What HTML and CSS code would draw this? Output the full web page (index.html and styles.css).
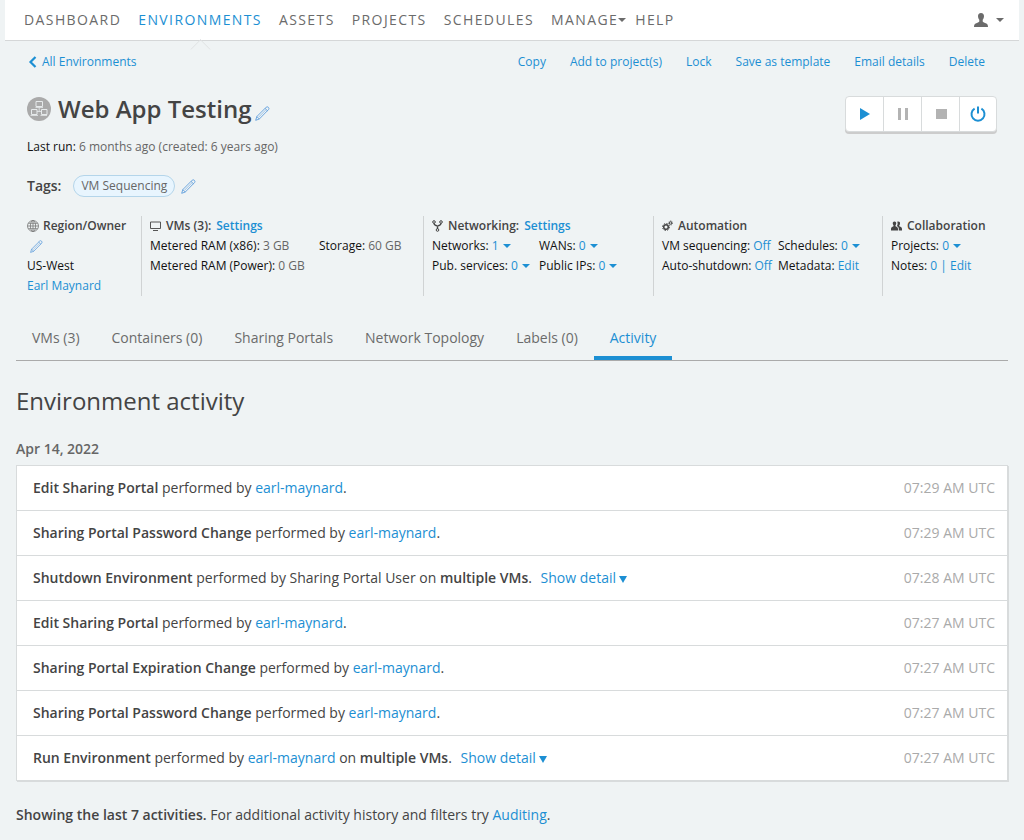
FILE: index.html
```html
<!DOCTYPE html>
<html lang="en">
<head>
<meta charset="utf-8">
<meta name="viewport" content="width=device-width, initial-scale=1">
<title>Web App Testing</title>
<link rel="stylesheet" href="styles.css">
</head>
<body>
<svg class="sprite" aria-hidden="true">
  <symbol id="pencil" viewBox="0 0 15 15"><g fill="none" stroke="currentColor" stroke-width="0.8" stroke-linejoin="round"><path d="M0.700 14.300l1.100-3.700L11.200 1.200q1-.9 2.100.1 1.200 1.100.3 2.200L4.300 13z"/><path d="M1.800 10.600l2.500 2.400M10 2.400l2.500 2.400"/><path d="M3.600 11.200l7.200-7.300" stroke-width="0.500"/></g></symbol>
</svg>

<header class="navbar">
  <nav class="nav">
    <a href="#">DASHBOARD</a>
    <a href="#" class="current">ENVIRONMENTS</a>
    <a href="#">ASSETS</a>
    <a href="#">PROJECTS</a>
    <a href="#">SCHEDULES</a>
    <button type="button" class="manage">MANAGE<span class="caret"></span></button>
    <a href="#">HELP</a>
  </nav>
  <button type="button" class="account" aria-label="Account">
    <svg width="14" height="14" viewBox="0 0 14 14" fill="currentColor"><path d="M7 0c2 0 3.100 1.300 3 3.200C9.900 5 9.200 6 8.700 6.700v1.800c.3.800 2 1.200 3.600 1.900 1.200.5 1.700 1.400 1.700 3.600H0c0-2.200.5-3.100 1.700-3.600 1.600-.7 3.300-1.100 3.600-1.900V6.700C4.800 6 4.100 5 4 3.200 3.900 1.300 5 0 7 0z"/></svg>
    <span class="caret"></span>
  </button>
</header>

<main>
  <div class="summary">
    <div class="toolbar">
      <a href="#" class="back"><svg width="9" height="12" viewBox="0 0 9 12"><path d="M7.500 1L2.500 6l5 5" fill="none" stroke="currentColor" stroke-width="2.200"/></svg>All Environments</a>
      <nav class="actions">
        <a href="#">Copy</a>
        <a href="#">Add to project(s)</a>
        <a href="#">Lock</a>
        <a href="#">Save as template</a>
        <a href="#">Email details</a>
        <a href="#">Delete</a>
      </nav>
    </div>

    <div class="title-row">
      <div class="title">
        <svg width="24" height="24" viewBox="0 0 24 24"><circle cx="12" cy="12" r="12" fill="#aaa"/><g fill="none" stroke="#e6eaeb"><path d="M9 4.500h6.500v5H9zM4.500 12.500H10v5H4.500zM14.500 12.500H20v5h-5.500z"/><path d="M8.500 10.500h7.500M3.500 18.500h7.500M13.500 18.500H20M12.200 10.500v4M10 14.500h4.500" stroke-width="0.800"/></g></svg>
        <h1>Web App Testing</h1>
        <button type="button" class="edit" aria-label="Edit name"><svg width="15" height="15"><use href="#pencil"/></svg></button>
      </div>
      <div class="power">
        <button type="button" aria-label="Run"><svg width="16" height="16" viewBox="0 0 16 16"><path d="M3 2l10 6-10 6z" fill="#1c8fd3"/></svg></button>
        <button type="button" aria-label="Suspend"><svg width="16" height="16" viewBox="0 0 16 16"><path d="M3 2h3v12H3zM10 2h3v12h-3z" fill="#b3b3b3"/></svg></button>
        <button type="button" aria-label="Shut down"><svg width="16" height="16" viewBox="0 0 16 16"><path d="M3 3h11v10H3z" fill="#b3b3b3"/></svg></button>
        <button type="button" aria-label="Power off"><svg width="16" height="16" viewBox="0 0 16 16"><path d="M4.600 2.600a6.500 6.500 0 1 0 6.800 0M8 0.500v7" fill="none" stroke="#1c8fd3" stroke-width="2"/></svg></button>
      </div>
    </div>

    <p class="last-run"><span class="dark">Last run:</span> 6 months ago (created: 6 years ago)</p>

    <div class="tags">
      <span class="tags-label">Tags:</span>
      <span class="tag">VM Sequencing</span>
      <button type="button" class="edit" aria-label="Edit tags"><svg width="15" height="15"><use href="#pencil"/></svg></button>
    </div>

    <div class="stats">
      <section class="stat">
        <h2><svg width="12" height="12" viewBox="0 0 12 12" fill="none" stroke="#777" stroke-width="0.800"><circle cx="6" cy="6" r="5.500"/><ellipse cx="6" cy="6" rx="2.600" ry="5.500"/><path d="M6 .5v11M.5 6h11M1.300 3.300h9.400M1.300 8.700h9.400"/></svg>Region/Owner</h2>
        <div class="line"><button type="button" class="edit region-edit" aria-label="Edit region and owner"><svg width="13" height="13"><use href="#pencil"/></svg></button></div>
        <div class="line">US-West</div>
        <div class="line"><a href="#">Earl Maynard</a></div>
      </section>
      <section class="stat">
        <h2><svg width="11" height="10" viewBox="0 0 11 10"><path d="M.5 1h10v6.500H.5z" fill="none" stroke="#555"/><path d="M3 9.500h5" stroke="#555"/></svg>VMs (3): <a href="#">Settings</a></h2>
        <div class="pairs vms">
          <span>Metered RAM (x86): <b>3 GB</b></span><span>Storage: <b>60 GB</b></span>
          <span>Metered RAM (Power): <b>0 GB</b></span>
        </div>
      </section>
      <section class="stat">
        <h2><svg width="11" height="12" viewBox="0 0 11 12" fill="none" stroke="#444"><circle cx="2" cy="2" r="1.300"/><circle cx="9" cy="2" r="1.300"/><circle cx="5.500" cy="10" r="1.300"/><path d="M2 3.300q0 1.500 2 2.200l1.500.8 1.500-.8q2-.7 2-2.200M5.500 6v3" stroke-width="1.400"/></svg>Networking: <a href="#">Settings</a></h2>
        <div class="pairs networking">
          <span>Networks: <a href="#">1<span class="caret"></span></a></span><span>WANs: <a href="#">0<span class="caret"></span></a></span>
          <span>Pub. services: <a href="#">0<span class="caret"></span></a></span><span>Public IPs: <a href="#">0<span class="caret"></span></a></span>
        </div>
      </section>
      <section class="stat">
        <h2><svg width="11" height="12" viewBox="0 0 11 12" fill="none" stroke="#444"><circle cx="4" cy="7" r="2.300" stroke-width="1.500"/><circle cx="4" cy="7" r="3.500" stroke-width="1" stroke-dasharray="1.400 1.350"/><circle cx="8.600" cy="3" r="1.200"/><circle cx="8.600" cy="3" r="2" stroke-dasharray=".9 .67" stroke-width=".8"/></svg>Automation</h2>
        <div class="pairs automation">
          <span>VM sequencing: <a href="#">Off</a></span><span>Schedules: <a href="#">0<span class="caret"></span></a></span>
          <span>Auto-shutdown: <a href="#">Off</a></span><span>Metadata: <a href="#">Edit</a></span>
        </div>
      </section>
      <section class="stat">
        <h2><svg width="11" height="10" viewBox="0 0 11 10" fill="#444"><path d="M3.500.5c1.400 0 2 1 1.700 2.300-.1.700-.3 1-.7 1.500v1c1.500.7 2.500 1 2.500 2.700V9.500H0V8c0-1.700 1-2 2.500-2.700v-1c-.4-.5-.6-.8-.7-1.500C1.500 1.500 2.100.5 3.500.5z"/><path d="M6.200.7C8 0 9.300 1 9 2.700c-.1.800-.3 1.100-.7 1.600v1C10 6 11 6.300 11 8v1.500H7.800V8c0-1.400-.6-2.200-1.700-2.800V4.500C6.800 3.500 6.800 1.800 6.200.7z"/></svg>Collaboration</h2>
        <div class="line">Projects: <a href="#">0<span class="caret"></span></a></div>
        <div class="line">Notes: <a href="#">0</a> <span class="bar">|</span> <a href="#">Edit</a></div>
      </section>
    </div>
  </div>

  <nav class="tabs">
    <a href="#">VMs (3)</a>
    <a href="#">Containers (0)</a>
    <a href="#">Sharing Portals</a>
    <a href="#">Network Topology</a>
    <a href="#">Labels (0)</a>
    <a href="#" class="active">Activity</a>
  </nav>

  <h2 class="heading">Environment activity</h2>
  <h3 class="date">Apr 14, 2022</h3>
  <ul class="log">
    <li><span><strong>Edit Sharing Portal</strong> performed by <a href="#">earl-maynard</a>.</span><time>07:29 AM UTC</time></li>
    <li><span><strong>Sharing Portal Password Change</strong> performed by <a href="#">earl-maynard</a>.</span><time>07:29 AM UTC</time></li>
    <li><span><strong>Shutdown Environment</strong> performed by Sharing Portal User on <strong>multiple VMs</strong>. <a href="#" class="detail">Show detail<i class="triangle"></i></a></span><time>07:28 AM UTC</time></li>
    <li><span><strong>Edit Sharing Portal</strong> performed by <a href="#">earl-maynard</a>.</span><time>07:27 AM UTC</time></li>
    <li><span><strong>Sharing Portal Expiration Change</strong> performed by <a href="#">earl-maynard</a>.</span><time>07:27 AM UTC</time></li>
    <li><span><strong>Sharing Portal Password Change</strong> performed by <a href="#">earl-maynard</a>.</span><time>07:27 AM UTC</time></li>
    <li><span><strong>Run Environment</strong> performed by <a href="#">earl-maynard</a> on <strong>multiple VMs</strong>. <a href="#" class="detail">Show detail<i class="triangle"></i></a></span><time>07:27 AM UTC</time></li>
  </ul>
  <p class="note"><strong>Showing the last 7 activities.</strong> For additional activity history and filters try <a href="#">Auditing</a>.</p>
</main>
</body>
</html>
```
FILE: styles.css
```css
* {
  box-sizing: border-box;
}

body {
  margin: 0;
  background: #eff3f4;
  color: #444;
  font: 14px/20px "Open Sans", sans-serif;
}

h1, h2, h3, p, ul {
  margin: 0;
  padding: 0;
}

a {
  color: #1c8fd3;
  text-decoration: none;
}

button {
  padding: 0;
  border: 0;
  background: none;
  color: inherit;
  font: inherit;
  letter-spacing: inherit;
  cursor: pointer;
}

svg {
  display: block;
  flex: none;
}

strong {
  font-weight: 600;
}

.sprite {
  position: absolute;
  width: 0;
  height: 0;
}

.caret {
  display: inline-block;
  border: 4px solid transparent;
  border-top-color: currentColor;
  border-bottom: 0;
  vertical-align: middle;
}

/* Top navigation */
.navbar {
  display: flex;
  justify-content: space-between;
  margin: 0 5px;
  padding: 0 15px 0 19px;
  background: #fff;
  border-bottom: 1px solid #d5d7d8;
  color: #6b6b6b;
}

.nav {
  display: flex;
  gap: 17px;
  line-height: 40px;
  letter-spacing: 0.1em;
}

.nav a {
  position: relative;
  color: inherit;
}

.nav .current {
  color: #1c8fd3;
}

.nav .current::after {
  content: "";
  position: absolute;
  left: 50%;
  top: 42px;
  width: 14px;
  height: 14px;
  margin-left: -7px;
  border: solid #e0e2e3;
  border-width: 1px 0 0 1px;
  transform: rotate(45deg);
  clip-path: polygon(0 0, 100% 0, 0 100%);
}

.manage {
  display: flex;
  align-items: center;
  margin-right: -8px;
}

.account {
  display: flex;
  align-items: center;
  gap: 8px;
}

/* Environment summary */
main {
  padding: 0 16px;
}

.summary {
  padding: 0 11px;
  font-size: 12px;
}

.toolbar {
  display: flex;
  justify-content: space-between;
  padding: 11px 12px 0 1px;
}

.back {
  display: flex;
  align-items: center;
  gap: 5px;
}

.actions {
  display: flex;
  gap: 24px;
}

.title-row {
  display: flex;
  justify-content: space-between;
  margin-top: 24px;
}

.title {
  display: flex;
  align-items: center;
  height: 26px;
}

h1 {
  margin: 0 4px 0 7px;
  font-size: 24px;
  line-height: 26px;
  font-weight: 600;
}

.edit {
  color: #4d93d9;
}

.title .edit {
  margin-top: 8px;
}

.power {
  display: flex;
  background: #fff;
  border: 1px solid #d8dbdc;
  border-radius: 4px;
  box-shadow: 0 2px 0 #ccc;
}

.power button {
  display: grid;
  place-items: center;
  width: 38px;
  height: 34px;
}

.power button:first-child,
.power button:last-child {
  width: 37px;
}

.power button + button {
  border-left: 1px solid #d8dbdc;
}

.last-run {
  margin-top: 5px;
  color: #666;
}

.dark {
  color: #111;
}

.tags {
  display: flex;
  align-items: center;
  margin-top: 18px;
}

.tags-label {
  font-size: 14px;
  font-weight: 600;
}

.tag {
  margin: 0 6px 0 12px;
  padding: 0 7px;
  border: 1px solid #b4d5ea;
  border-radius: 11px;
  background: #e8f5fe;
  color: #666;
}

.stats {
  display: grid;
  grid-template-columns: 114fr 282fr 230fr 229fr 115fr;
  margin-top: 19px;
  color: #111;
}

.stat + .stat {
  padding-left: 8px;
  border-left: 1px solid #d0d3d4;
}

.stat h2 {
  display: flex;
  align-items: center;
  gap: 4px;
  font-size: 12px;
  line-height: 20px;
  font-weight: 600;
  color: #444;
  white-space: nowrap;
}

.stat + .stat h2 {
  gap: 5px;
}

.line {
  white-space: nowrap;
}

.region-edit {
  display: flex;
  align-items: center;
  height: 20px;
  margin-left: 3px;
}

.pairs {
  display: grid;
  white-space: nowrap;
}

.vms {
  grid-template-columns: 169px 1fr;
}

.networking {
  grid-template-columns: 107px 1fr;
}

.automation {
  grid-template-columns: 116px 1fr;
}

.stats b {
  font-weight: 400;
  color: #666;
}

.stats .caret {
  margin: 0 0 2px 4px;
}

.bar {
  color: #1c8fd3;
}

/* Tabs */
.tabs {
  display: flex;
  margin-top: 20px;
  border-bottom: 1px solid #aaa;
}

.tabs a {
  padding: 12px 16px 8px;
  border-bottom: 4px solid transparent;
  color: #6b6b6b;
}

.tabs .active {
  border-color: #1c8fd3;
  color: #1c8fd3;
}

/* Activity log */
.heading {
  margin-top: 24px;
  font-size: 24px;
  line-height: 32px;
  font-weight: 400;
}

.date {
  margin-top: 22px;
  font-size: 14px;
  font-weight: 600;
  color: #666;
}

.log {
  margin-top: 6px;
  border: 1px solid #d8dbdc;
  background: #fff;
  box-shadow: 1px 1px 0 #d8dbdc;
  list-style: none;
}

.log li {
  display: flex;
  justify-content: space-between;
  padding: 12px 12px 12px 16px;
}

.log li + li {
  border-top: 1px solid #d8dbdc;
}

.log time {
  color: #aaa;
}

.detail {
  margin-left: 5px;
}

.triangle {
  display: inline-block;
  margin-left: 3px;
  border: 4px solid transparent;
  border-top: 7px solid currentColor;
  border-bottom: 0;
}

.note {
  margin-top: 24px;
}
```
